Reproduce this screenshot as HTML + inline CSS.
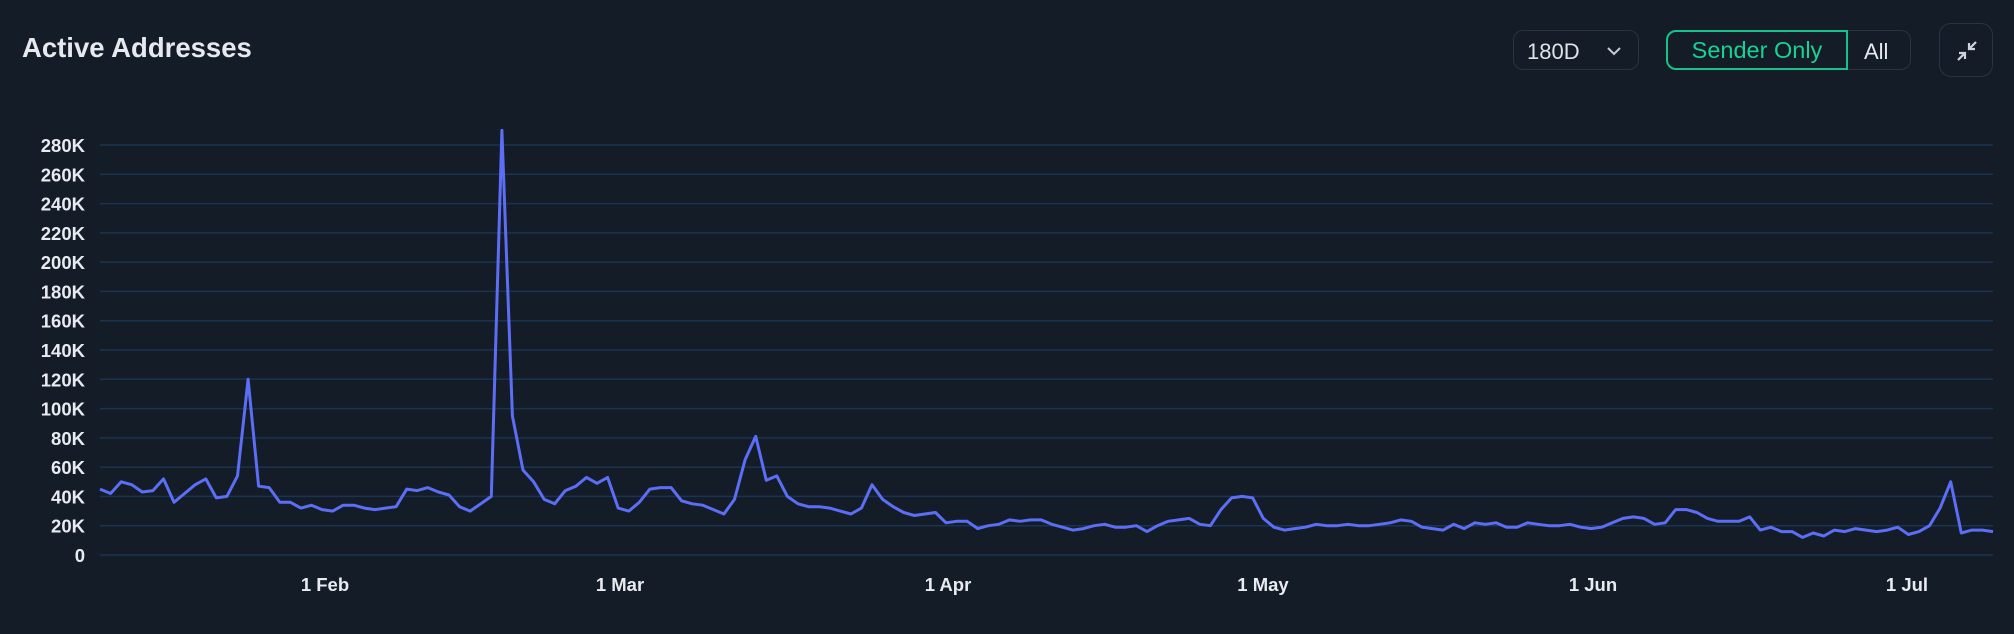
<!DOCTYPE html>
<html><head><meta charset="utf-8"><style>
body{margin:0;background:#131c27;width:2014px;height:634px;overflow:hidden;font-family:"Liberation Sans",sans-serif;color:#e8ebef}
.t{position:absolute;left:22px;top:32px;font-size:27.5px;font-weight:bold;color:#e6e9ee}
.btn{position:absolute;border:1px solid #2a3440;border-radius:10px;box-sizing:border-box;font-size:22px}
</style></head><body>
<div class="t">Active Addresses</div>
<div class="btn" style="left:1513px;top:30px;width:126px;height:40px;">
<span style="position:absolute;left:13px;top:8px;color:#dfe3e8">180D</span>
<svg style="position:absolute;left:92px;top:14px" width="16" height="12"><path d="M2 3 L8 9 L14 3" stroke="#c8ccd2" stroke-width="2" fill="none"/></svg></div>
<div class="btn" style="left:1666px;top:30px;width:245px;height:40px;">
<div style="position:absolute;left:-1px;top:-1px;width:182px;height:40px;border:2px solid #16c28a;border-radius:10px 0 0 10px;box-sizing:border-box;color:#19d193;text-align:center;line-height:36px;font-size:23.5px">Sender Only</div>
<span style="position:absolute;left:197px;top:8px;color:#e6e9ee">All</span></div>
<div class="btn" style="left:1939px;top:23px;width:54px;height:54px;border-radius:12px">
<svg style="position:absolute;left:14px;top:14px" width="26" height="26" viewBox="0 0 26 26"><path d="M4 22 L11 15 M5 15 H11 V21 M22 4 L15 11 M15 5 V11 H21" stroke="#d0d4da" stroke-width="2.2" fill="none"/></svg></div>
<svg id="c" style="position:absolute;left:0;top:0" width="2014" height="634"></svg>
<script>
var s='',ys=[280,260,240,220,200,180,160,140,120,100,80,60,40,20,0];
ys.forEach(function(v){var y=555-v*410/280;s+='<line x1="100" x2="1993" y1="'+y+'" y2="'+y+'" stroke="#1a3350" stroke-width="1.5"/>';
s+='<text x="85" y="'+(y+7)+'" text-anchor="end" font-size="18.5" font-weight="bold" fill="#e8ebef" font-family="Liberation Sans">'+(v?v+'K':'0')+'</text>';});
[['1 Feb',325],['1 Mar',620],['1 Apr',948],['1 May',1263],['1 Jun',1593],['1 Jul',1907]].forEach(function(a){s+='<text x="'+a[1]+'" y="591" text-anchor="middle" font-size="18.5" font-weight="bold" fill="#e8ebef" font-family="Liberation Sans">'+a[0]+'</text>';});
var d=[45,42,50,48,43,44,52,36,42,48,52,39,40,54,120,47,46,36,36,32,34,31,30,34,34,32,31,32,33,45,44,46,43,41,33,30,35,40,290,95,58,50,38,35,44,47,53,49,53,32,30,36,45,46,46,37,35,34,31,28,38,65,81,51,54,40,35,33,33,32,30,28,32,48,38,33,29,27,28,29,22,23,23,18,20,21,24,23,24,24,21,19,17,18,20,21,19,19,20,16,20,23,24,25,21,20,31,39,40,39,25,19,17,18,19,21,20,20,21,20,20,21,22,24,23,19,18,17,21,18,22,21,22,19,19,22,21,20,20,21,19,18,19,22,25,26,25,21,22,31,31,29,25,23,23,23,26,17,19,16,16,12,15,13,17,16,18,17,16,17,19,14,16,20,32,50,15,17,17,16];
var st=(1993-100)/(d.length-1),p=d.map(function(v,i){return (100+i*st).toFixed(1)+','+(555-v*410/280).toFixed(1)}).join(' ');
s+='<polyline points="'+p+'" fill="none" stroke="#5c6ef5" stroke-width="3" stroke-linejoin="round"/>';
document.getElementById('c').innerHTML=s;
</script>
</body></html>
